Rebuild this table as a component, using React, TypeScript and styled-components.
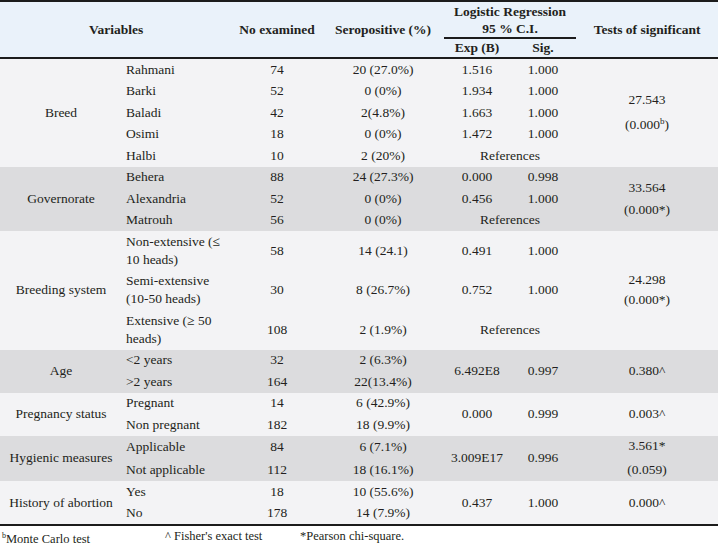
import React from 'react';
import styled, { createGlobalStyle } from 'styled-components';

const GlobalStyle = createGlobalStyle`
  body {
    margin: 0;
    background: #fff;
    color: #231f20;
    font-family: 'Liberation Serif', 'Times New Roman', serif;
  }
`;

const Frame = styled.div`
  width: 718px;
  border-top: 2px solid #1c1c1c;
  border-bottom: 2px solid #1c1c1c;
`;

const Table = styled.table`
  width: 100%;
  table-layout: fixed;
  border-collapse: separate;
  border-spacing: 0;
  font-size: 13.5px;
`;

const Head = styled.thead`
  background: #eaf2fa;
`;

const Th = styled.th<{ $lines?: boolean }>`
  font-weight: bold;
  text-align: center;
  vertical-align: middle;
  padding: ${(p) => (p.$lines ? '0.5px 4px' : '0 4px')};
  line-height: ${(p) => (p.$lines ? '17px' : '18px')};
  border-bottom: 2px solid #1c1c1c;
`;

const Group = styled.tbody<{ $shade: boolean }>`
  background: ${(p) => (p.$shade ? '#dcdcde' : '#f3f3f5')};
`;

const Td = styled.td<{ $align?: 'left' | 'center' }>`
  text-align: ${(p) => p.$align || 'center'};
  vertical-align: middle;
  padding: 1.75px 4px;
  line-height: 18px;
`;

const TestStack = styled.div<{ $gap: number }>`
  display: flex;
  flex-direction: column;
  align-items: center;
  gap: ${(p) => p.$gap}px;
`;

const Footer = styled.div`
  display: grid;
  grid-template-columns: 163px 135px 1fr;
  padding: 1px 0 0 2px;
  font-size: 12.5px;
  line-height: 18px;
`;

type Row = { name: string; n: number; pos: string; exp?: string; sig?: string };

type GroupData = {
  label: string;
  shade: boolean;
  rows: Row[];
  merged?: { exp: string; sig: string };
  tests: React.ReactNode[];
  gap: number;
};

const groups: GroupData[] = [
  {
    label: 'Breed',
    shade: false,
    gap: 7,
    rows: [
      { name: 'Rahmani', n: 74, pos: '20 (27.0%)', exp: '1.516', sig: '1.000' },
      { name: 'Barki', n: 52, pos: '0 (0%)', exp: '1.934', sig: '1.000' },
      { name: 'Baladi', n: 42, pos: '2(4.8%)', exp: '1.663', sig: '1.000' },
      { name: 'Osimi', n: 18, pos: '0 (0%)', exp: '1.472', sig: '1.000' },
      { name: 'Halbi', n: 10, pos: '2 (20%)' },
    ],
    tests: [
      '27.543',
      <span key="b">
        (0.000<sup style={{ fontSize: '9px', lineHeight: 0 }}>b</sup>)
      </span>,
    ],
  },
  {
    label: 'Governorate',
    shade: true,
    gap: 4,
    rows: [
      { name: 'Behera', n: 88, pos: '24 (27.3%)', exp: '0.000', sig: '0.998' },
      { name: 'Alexandria', n: 52, pos: '0 (0%)', exp: '0.456', sig: '1.000' },
      { name: 'Matrouh', n: 56, pos: '0 (0%)' },
    ],
    tests: ['33.564', '(0.000*)'],
  },
  {
    label: 'Breeding system',
    shade: false,
    gap: 2,
    rows: [
      { name: 'Non-extensive (≤ 10 heads)', n: 58, pos: '14 (24.1)', exp: '0.491', sig: '1.000' },
      { name: 'Semi-extensive (10-50 heads)', n: 30, pos: '8 (26.7%)', exp: '0.752', sig: '1.000' },
      { name: 'Extensive (≥ 50 heads)', n: 108, pos: '2 (1.9%)' },
    ],
    tests: ['24.298', '(0.000*)'],
  },
  {
    label: 'Age',
    shade: true,
    gap: 0,
    rows: [
      { name: '<2 years', n: 32, pos: '2 (6.3%)' },
      { name: '>2 years', n: 164, pos: '22(13.4%)' },
    ],
    merged: { exp: '6.492E8', sig: '0.997' },
    tests: ['0.380^'],
  },
  {
    label: 'Pregnancy status',
    shade: false,
    gap: 0,
    rows: [
      { name: 'Pregnant', n: 14, pos: '6 (42.9%)' },
      { name: 'Non pregnant', n: 182, pos: '18 (9.9%)' },
    ],
    merged: { exp: '0.000', sig: '0.999' },
    tests: ['0.003^'],
  },
  {
    label: 'Hygienic measures',
    shade: true,
    gap: 6,
    rows: [
      { name: 'Applicable', n: 84, pos: '6 (7.1%)' },
      { name: 'Not applicable', n: 112, pos: '18 (16.1%)' },
    ],
    merged: { exp: '3.009E17', sig: '0.996' },
    tests: ['3.561*', '(0.059)'],
  },
  {
    label: 'History of abortion',
    shade: false,
    gap: 0,
    rows: [
      { name: 'Yes', n: 18, pos: '10 (55.6%)' },
      { name: 'No', n: 178, pos: '14 (7.9%)' },
    ],
    merged: { exp: '0.437', sig: '1.000' },
    tests: ['0.000^'],
  },
];

const App = () => {
  return (
    <>
      <GlobalStyle />
      <Frame>
        <Table>
          <colgroup>
            <col style={{ width: 122 }} />
            <col style={{ width: 110 }} />
            <col style={{ width: 90 }} />
            <col style={{ width: 122 }} />
            <col style={{ width: 66 }} />
            <col style={{ width: 66 }} />
            <col style={{ width: 142 }} />
          </colgroup>
          <Head>
            <tr>
              <Th colSpan={2} rowSpan={2}>Variables</Th>
              <Th rowSpan={2}>No examined</Th>
              <Th rowSpan={2}>Seropositive (%)</Th>
              <Th colSpan={2} $lines>
                Logistic Regression
                <br />
                95 % C.I.
              </Th>
              <Th rowSpan={2}>Tests of significant</Th>
            </tr>
            <tr>
              <Th>Exp (B)</Th>
              <Th>Sig.</Th>
            </tr>
          </Head>
          {groups.map((g) => (
            <Group key={g.label} $shade={g.shade}>
              {g.rows.map((r, i) => (
                <tr key={r.name}>
                  {i === 0 && <Td rowSpan={g.rows.length}>{g.label}</Td>}
                  <Td $align="left">{r.name}</Td>
                  <Td>{r.n}</Td>
                  <Td>{r.pos}</Td>
                  {g.merged ? (
                    i === 0 && (
                      <>
                        <Td rowSpan={g.rows.length}>{g.merged.exp}</Td>
                        <Td rowSpan={g.rows.length}>{g.merged.sig}</Td>
                      </>
                    )
                  ) : r.exp ? (
                    <>
                      <Td>{r.exp}</Td>
                      <Td>{r.sig}</Td>
                    </>
                  ) : (
                    <Td colSpan={2}>References</Td>
                  )}
                  {i === 0 && (
                    <Td rowSpan={g.rows.length}>
                      <TestStack $gap={g.gap}>
                        {g.tests.map((t, k) => (
                          <div key={k}>{t}</div>
                        ))}
                      </TestStack>
                    </Td>
                  )}
                </tr>
              ))}
            </Group>
          ))}
        </Table>
      </Frame>
      <Footer>
        <span>
          <sup style={{ fontSize: '8px' }}>b</sup>Monte Carlo test
        </span>
        <span>^ Fisher's exact test</span>
        <span>*Pearson chi-square.</span>
      </Footer>
    </>
  );
};

export default App;
